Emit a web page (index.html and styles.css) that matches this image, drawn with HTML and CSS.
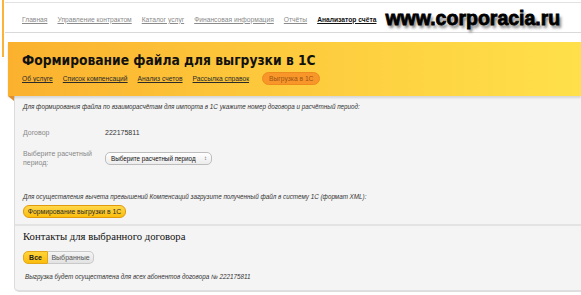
FILE: index.html
```html
<!DOCTYPE html>
<html lang="ru">
<head>
<meta charset="utf-8">
<link rel="stylesheet" href="styles.css">
</head>
<body>
<div class="shell">
  <div class="edge"></div>
  <div class="main">
    <div class="nav">
      <a class="nav-link">Главная</a>
      <a class="nav-link">Управление контрактом</a>
      <a class="nav-link">Каталог услуг</a>
      <a class="nav-link">Финансовая информация</a>
      <a class="nav-link">Отчёты</a>
      <a class="nav-link nav-active">Анализатор счёта</a>
      <span class="watermark">www.corporacia.ru</span>
    </div>
    <div class="banner">
      <h1 class="title">Формирование файла для выгрузки в 1С</h1>
      <div class="subnav">
        <a class="sub-link">Об услуге</a>
        <a class="sub-link">Список компенсаций</a>
        <a class="sub-link">Анализ счетов</a>
        <a class="sub-link">Рассылка справок</a>
        <span class="pill">Выгрузка в 1С</span>
      </div>
      <div class="fold"></div>
    </div>
    <div class="panel">
      <p class="note note-top">Для формирования файла по взаиморасчётам для импорта в 1С укажите номер договора и расчётный период:</p>
      <div class="row row-contract">
        <div class="label">Договор</div>
        <div class="value">222175811</div>
      </div>
      <div class="row row-period">
        <div class="label">Выберите расчетный<br>период:</div>
        <div class="select"><span>Выберите расчетный период</span><span class="arrows">&#8597;</span></div>
      </div>
      <p class="note note-xml">Для осуществления вычета превышений Компенсаций загрузите полученный файл в систему 1С (формат XML):</p>
      <div class="btn">Формирование выгрузки в 1С</div>
      <div class="divider"></div>
      <h2 class="contacts">Контакты для выбранного договора</h2>
      <div class="toggle">
        <span class="tg tg-on">Все</span><span class="tg tg-off">Выбранные</span>
      </div>
      <p class="note note-bottom">Выгрузка будет осуществлена для всех абонентов договора № 222175811</p>
    </div>
  </div>
</div>
</body>
</html>
```
FILE: styles.css
```css
* { box-sizing: border-box; }
body {
  margin: 0;
  background: #fff;
  font-family: "Liberation Sans", Arial, sans-serif;
  color: #333;
  width: 581px;
  height: 295px;
  overflow: hidden;
}
.shell { display: flex; align-items: flex-start; }
.edge {
  width: 2px;
  height: 57px;
  margin-left: 2px;
  background: #fbb33a;
  flex: none;
}
.main { flex: 1; min-width: 0; }
.nav {
  margin-left: 1px;
  margin-top: 2px;
  height: 31px;
  border-top: 1px solid #e2e2e2;
  border-bottom: 1px solid #d9d9d9;
  display: flex;
  align-items: center;
  padding: 3px 0 0 17px;
  gap: 10px;
  font-size: 6.7px;
  white-space: nowrap;
}
.nav-link {
  color: #8a8a8a;
  text-decoration: underline;
}
.nav-active {
  color: #111;
  font-weight: bold;
}
.watermark {
  margin-left: -1px;
  margin-top: -2px;
  font-family: "Liberation Sans", Arial, sans-serif;
  font-weight: bold;
  font-size: 19.5px;
  color: #000;
  text-shadow: 2px 3px 3px rgba(0,0,0,0.55);
  -webkit-text-stroke: 0.8px #000;
}
.banner {
  margin-top: 9px;
  margin-left: 4px;
  height: 54px;
  background: linear-gradient(90deg, #fbb12e 0%, #fdc93c 45%, #ffe04a 100%);
  padding: 9px 0 0 14px;
  position: relative;
  box-shadow: 0 2px 2px rgba(0,0,0,0.12);
}
.title {
  margin: 0;
  font-family: "DejaVu Sans Condensed", "DejaVu Sans", sans-serif;
  font-weight: bold;
  font-size: 13.7px;
  color: #111;
  line-height: 18px;
}
.subnav {
  display: flex;
  align-items: center;
  gap: 10px;
  margin-top: 3px;
  font-size: 6.7px;
}
.sub-link { color: #2a2a2a; text-decoration: underline; }
.pill {
  background: #f8962a;
  border: 1px solid #ef8a1e;
  border-radius: 7px;
  color: #9e5412;
  padding: 2px 6px;
  margin-left: 3px;
}
.fold {
  position: absolute;
  left: 0;
  bottom: -5px;
  width: 0;
  height: 0;
  border-top: 5px solid #e0902a;
  border-left: 6px solid transparent;
}
.panel {
  margin-left: 10px;
  background: #f4f4f4;
  border-left: 1px solid #dcdcdc;
  border-bottom: 2px solid #dedede;
  border-bottom-left-radius: 5px;
  padding: 1px 0 0 8px;
  height: 196px;
  font-size: 7px;
}
.note {
  margin: 0;
  font-style: italic;
  color: #333;
  font-size: 6.3px;
  line-height: 8px;
}
.note-top { margin-top: 6px; }
.row { display: flex; align-items: center; }
.label { width: 82px; color: #888; line-height: 9px; }
.value { color: #333; }
.row-contract { margin-top: 17px; }
.row-period { margin-top: 12px; }
.select {
  height: 13px;
  width: 107px;
  border: 1px solid #bdbdbd;
  border-radius: 5px;
  background: linear-gradient(#ffffff, #ececec);
  display: flex;
  align-items: center;
  justify-content: space-between;
  padding: 0 4px 0 5px;
  color: #111;
  font-size: 6.3px;
  white-space: nowrap;
}
.arrows { font-size: 6px; color: #666; }
.note-xml { margin-top: 26px; }
.btn {
  margin-top: 4px;
  width: 103px;
  height: 13px;
  border: 1px solid #e19a0c;
  border-radius: 6px;
  background: linear-gradient(#ffd84a, #fbbd0c);
  display: flex;
  align-items: center;
  justify-content: center;
  color: #2a2a2a;
  font-size: 6.8px;
}
.divider {
  margin: 6px 0 0 -8px;
  border-top: 2px solid #e3e3e3;
}
.contacts {
  margin: 2px 0 0 0;
  font-family: "Liberation Serif", "DejaVu Serif", serif;
  font-weight: normal;
  font-size: 10.7px;
  color: #111;
  line-height: 16px;
}
.toggle {
  display: flex;
  margin-top: 7px;
  height: 13px;
}
.tg {
  display: flex;
  align-items: center;
  justify-content: center;
  font-size: 7px;
  border: 1px solid #c9c9c9;
}
.tg-on {
  width: 25px;
  background: linear-gradient(#ffd43a, #fbbd0c);
  border-color: #e2a81a;
  border-radius: 5px 0 0 5px;
  font-weight: bold;
  color: #222;
}
.tg-off {
  width: 46px;
  background: linear-gradient(#f5f5f5, #e2e2e2);
  border-left: none;
  border-radius: 0 5px 5px 0;
  color: #555;
}
.note-bottom { margin-top: 9px; padding-left: 2px; }
```
